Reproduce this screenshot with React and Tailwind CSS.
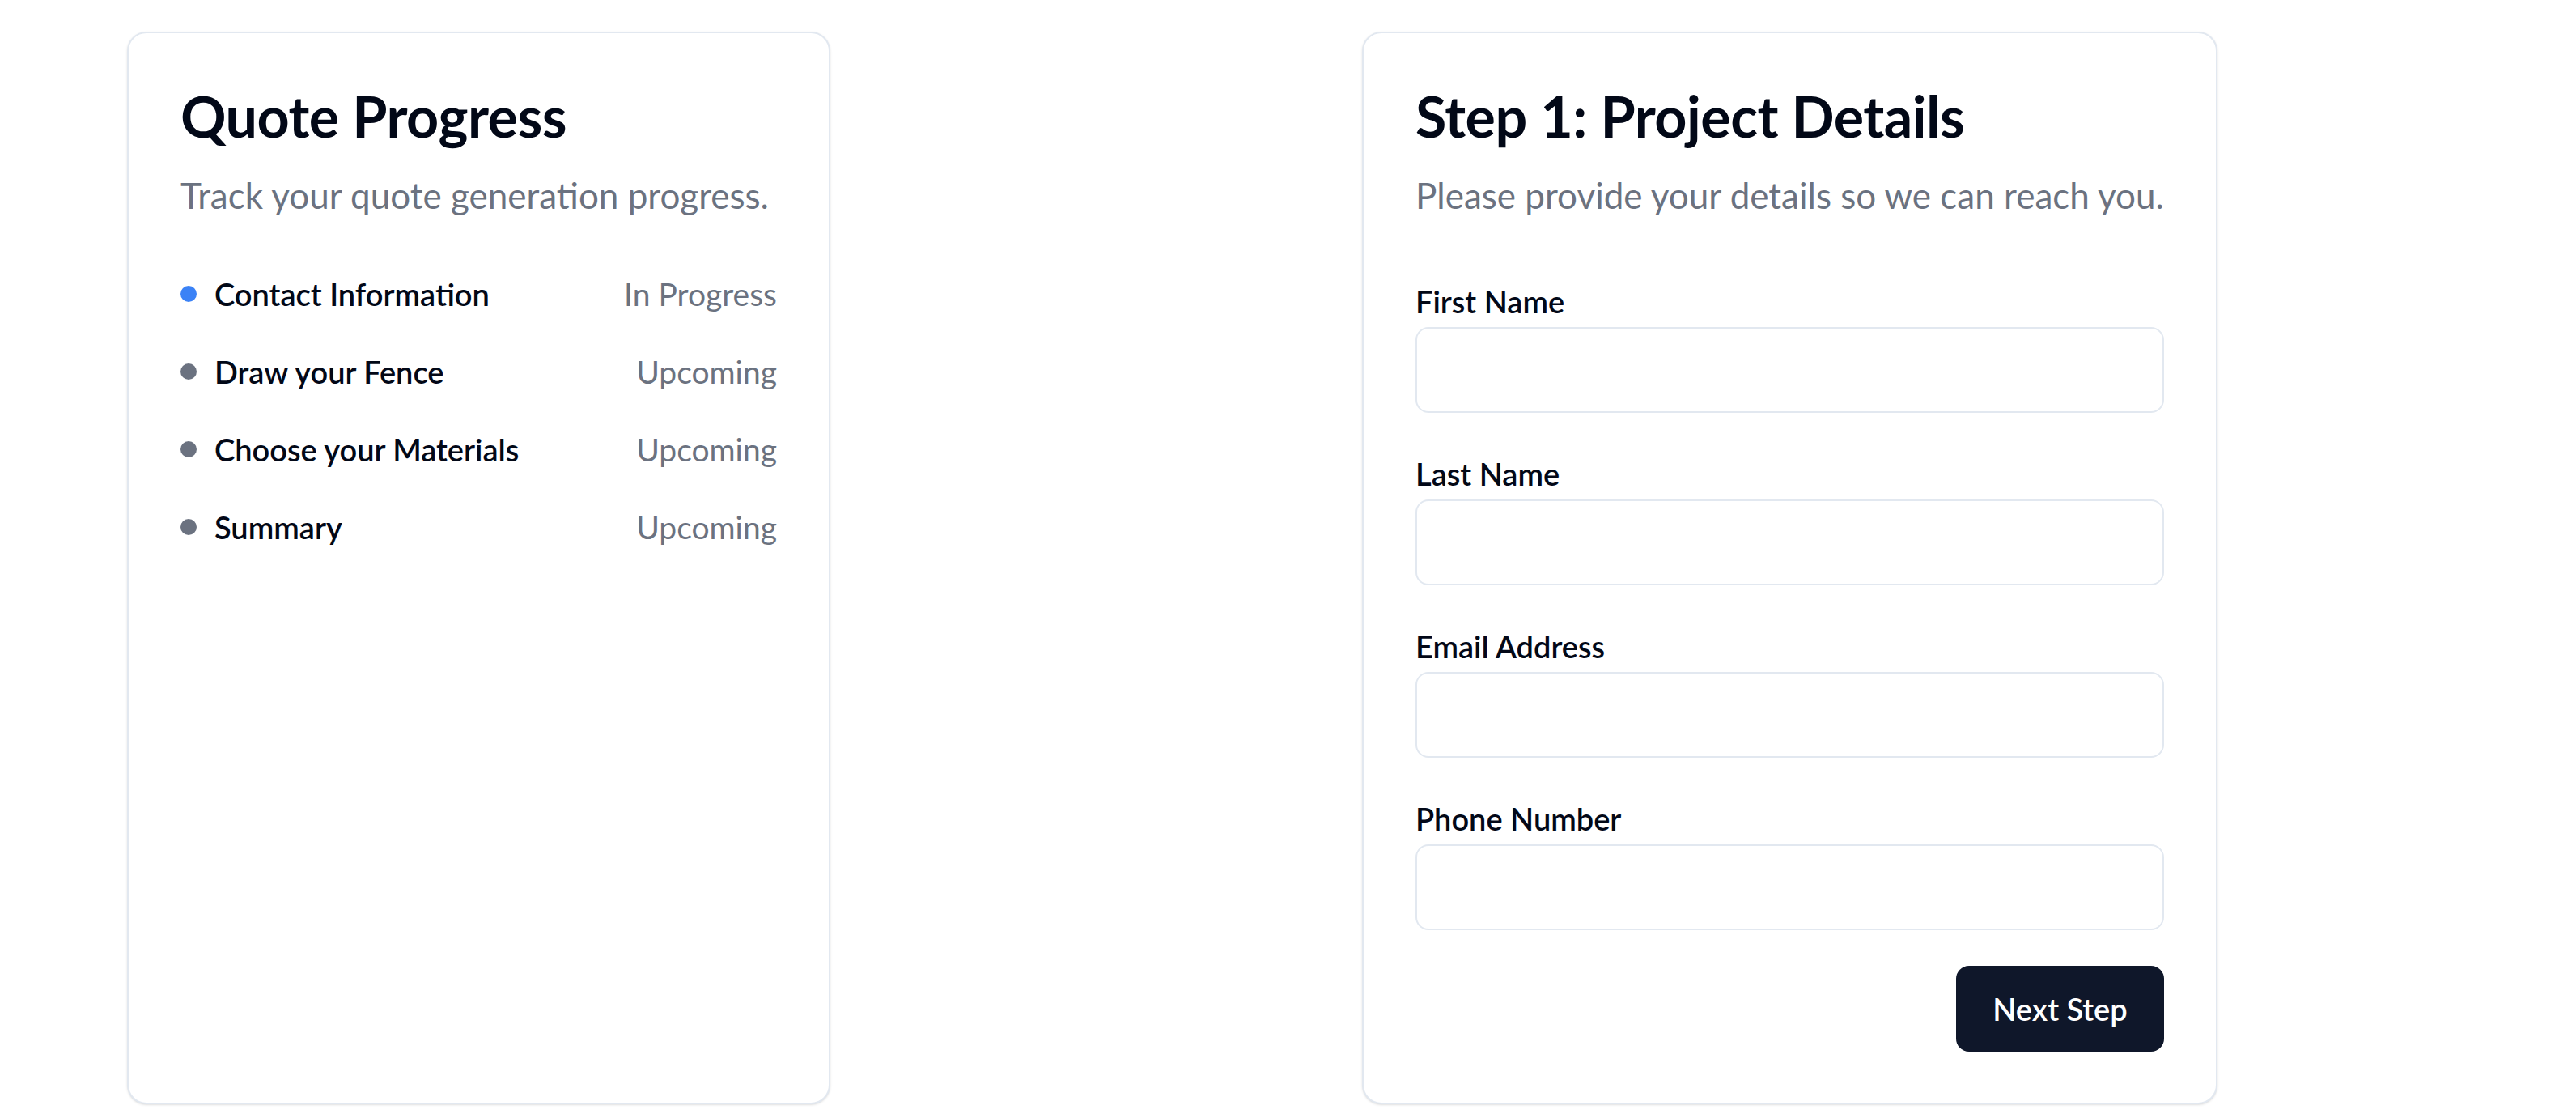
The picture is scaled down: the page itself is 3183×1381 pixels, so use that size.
import React from "react";

const steps = [
  { name: "Contact Information", status: "In Progress", active: true },
  { name: "Draw your Fence", status: "Upcoming" },
  { name: "Choose your Materials", status: "Upcoming" },
  { name: "Summary", status: "Upcoming" },
];

const fields = ["First Name", "Last Name", "Email Address", "Phone Number"];

export default function App() {
  return (
    <div
      className="min-h-screen w-full bg-white text-[#020817]"
      style={{ fontFamily: "Lato, 'Noto Sans', sans-serif" }}
    >
      <div className="flex items-stretch pl-[157px] pt-[39px]">
        <div className="w-[869px] rounded-[24px] border-2 border-[#e2e8f0] bg-white p-[64px] pt-[62px] shadow-sm">
          <h2 className="text-[70px] font-bold leading-[80px] tracking-[-0.5px]">Quote Progress</h2>
          <p className="mt-[30px] text-[44px] leading-[56px] text-[#6b7280]">
            Track your quote generation progress.
          </p>
          <ul className="mt-[70px] flex flex-col gap-[48px]">
            {steps.map((s) => (
              <li key={s.name} className="flex h-[48px] items-center justify-between">
                <div className="flex items-center gap-[22px]">
                  <span
                    className={
                      s.active
                        ? "h-[20px] w-[20px] rounded-full bg-[#3b82f6]"
                        : "h-[20px] w-[20px] rounded-full bg-[#6b7280]"
                    }
                  />
                  <span className="text-[38px] font-semibold leading-[48px]">{s.name}</span>
                </div>
                <span className="text-[39px] leading-[48px] text-[#6b7280]">{s.status}</span>
              </li>
            ))}
          </ul>
        </div>

        <div className="ml-[657px] w-[1057px] rounded-[24px] border-2 border-[#e2e8f0] bg-white p-[64px] pb-[63px] pt-[62px] shadow-sm">
          <h2 className="text-[70px] font-bold leading-[80px] tracking-[-0.5px]">Step 1: Project Details</h2>
          <p className="mt-[30px] text-[44px] leading-[56px] text-[#6b7280]">
            Please provide your details so we can reach you.
          </p>
          <form className="mt-[79px] flex flex-col">
            {fields.map((f, i) => (
              <div key={f} className={i === 0 ? "flex flex-col" : "mt-[51px] flex flex-col"}>
                <label className="text-[38px] font-semibold leading-[48px]">{f}</label>
                <input
                  type="text"
                  className="mt-[8px] h-[106px] w-full rounded-[16px] border-2 border-[#e2e8f0] bg-white px-[24px] text-[32px] outline-none"
                />
              </div>
            ))}
            <div className="mt-[44px] flex justify-end">
              <button
                type="button"
                className="h-[106px] w-[257px] rounded-[16px] bg-[#0f172a] text-[38px] font-semibold text-white"
              >
                Next Step
              </button>
            </div>
          </form>
        </div>
      </div>
    </div>
  );
}
